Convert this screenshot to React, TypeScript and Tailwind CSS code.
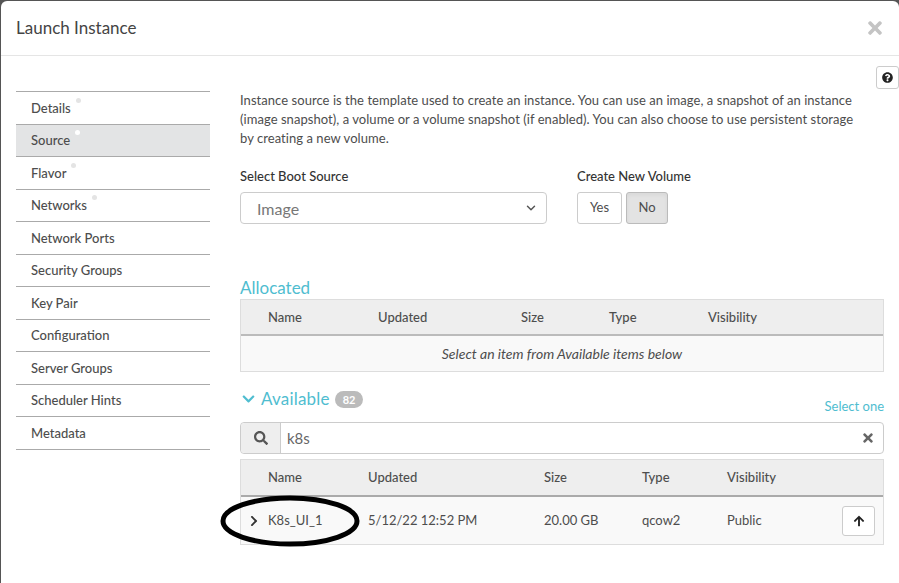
import { ChevronDown } from 'lucide-react';
import { FaArrowUp, FaChevronDown, FaChevronRight, FaQuestionCircle, FaSearch, FaTimes } from 'react-icons/fa';

const steps = [
  { label: 'Details', req: true },
  { label: 'Source', req: true, active: true },
  { label: 'Flavor', req: true },
  { label: 'Networks', req: true },
  { label: 'Network Ports' },
  { label: 'Security Groups' },
  { label: 'Key Pair' },
  { label: 'Configuration' },
  { label: 'Server Groups' },
  { label: 'Scheduler Hints' },
  { label: 'Metadata' },
];

export default function App() {
  return (
    <div className="h-[583px] w-[899px] overflow-hidden bg-[#555] pl-px pt-px font-['Lato',sans-serif] text-[13px] text-[#4d4d4d]">
      <div className="relative h-[582px] w-[898px] rounded-t-[6px] bg-white">
        <div className="flex h-[55px] items-center justify-between border-b border-[#e5e5e5] pl-[15px] pr-[15px]">
          <h1 className="text-[17px] font-normal text-[#444]">Launch Instance</h1>
          <FaTimes className="h-[20px] w-[18px] text-[#c4c4c4]" />
        </div>

        <div className="flex justify-end pt-[10px]">
          <button className="flex h-[23px] w-[23px] items-center justify-center rounded-[3px] border border-[#ccc]">
            <FaQuestionCircle className="h-[11px] w-[11px] text-[#222]" />
          </button>
        </div>

        <div className="mt-[2px] flex pl-[15px] pr-[15px]">
          <ul className="w-[194px] self-start border-b border-[#aaa]">
            {steps.map((s) => (
              <li key={s.label} className={`flex h-[32.55px] items-center border-t border-[#aaa] pl-[15px] pt-[1px] font-medium ${s.active ? 'bg-[#e3e4e5]' : ''}`}>
                <span className="relative">
                  {s.label}
                  {s.req && <span className={`absolute -right-[10px] -top-[1px] h-[5px] w-[5px] rounded-full ${s.active ? 'bg-white' : 'bg-[#e4e4e4]'}`} />}
                </span>
              </li>
            ))}
          </ul>

          <div className="ml-[30px] w-[644px]">
            <p className="w-[625px] text-[13px] leading-[19px] tracking-[0.05px]">
              Instance source is the template used to create an instance. You can use an image, a snapshot of an instance (image snapshot), a volume or a volume snapshot (if enabled). You can also choose to use persistent storage by creating a new volume.
            </p>

            <div className="mt-[19px] flex">
              <div className="w-[337px]">
                <div className="mb-[7px] h-[18px] font-medium leading-[18px] text-[#333]">Select Boot Source</div>
                <div className="flex h-[32px] w-[307px] items-center justify-between rounded-[4px] border border-[#ccc] pl-[16px] pr-[8px] text-[16px] text-[#777]">
                  <span className="pt-[1px]">Image</span>
                  <ChevronDown className="h-[14px] w-[14px] text-[#555]" strokeWidth={2.5} />
                </div>
              </div>
              <div>
                <div className="mb-[7px] h-[18px] font-medium leading-[18px] text-[#333]">Create New Volume</div>
                <div className="flex gap-[4px]">
                  <button className="h-[32px] w-[45px] rounded-[3px] border border-[#ccc]">Yes</button>
                  <button className="h-[32px] w-[42px] rounded-[3px] border border-[#bbb] bg-[#e3e3e3] shadow-inner">No</button>
                </div>
              </div>
            </div>

            <h2 className="mt-[53px] h-[22px] text-[17px] leading-[22px] text-[#4fbdd0]">Allocated</h2>
            <div className="border border-[#ddd]">
              <div className="flex h-[36px] items-center border-b-2 border-[#bbb] bg-[#eee] pt-[2px] font-medium">
                <span className="ml-[27px] w-[110px]">Name</span>
                <span className="w-[143px]">Updated</span>
                <span className="w-[88px]">Size</span>
                <span className="w-[99px]">Type</span>
                <span>Visibility</span>
              </div>
              <div className="flex h-[35px] items-center justify-center bg-[#f9f9f9] text-[14px] italic">
                Select an item from Available items below
              </div>
            </div>

            <div className="mt-[16px] flex h-[22px] items-center">
              <FaChevronDown className="h-[14px] w-[17px] text-[#4fbdd0]" />
              <span className="ml-[4px] text-[17px] tracking-[0.2px] text-[#4fbdd0]">Available</span>
              <span className="ml-[5px] rounded-full bg-[#bbb] px-[8px] py-[1px] text-[11px] font-bold leading-[15px] text-white">82</span>
              <span className="ml-auto mt-[16px] text-[13px] text-[#4fbdd0]">Select one</span>
            </div>

            <div className="mt-[12px] flex h-[32px] items-center rounded-[4px] border border-[#ccc]">
              <div className="flex h-full w-[40px] items-center justify-center rounded-l-[4px] border-r border-[#ccc] bg-[#eee]">
                <FaSearch className="h-[14px] w-[14px] text-[#555]" />
              </div>
              <span className="ml-[6px] text-[15px] text-[#666]">k8s</span>
              <FaTimes className="ml-auto mr-[9px] h-[14px] w-[12px] text-[#666]" />
            </div>

            <div className="mt-[5px] border border-[#ddd]">
              <div className="flex h-[37px] items-center border-b-2 border-[#aaa] bg-[#eee] font-medium">
                <span className="ml-[27px] w-[100px]">Name</span>
                <span className="w-[176px]">Updated</span>
                <span className="w-[98px]">Size</span>
                <span className="w-[85px]">Type</span>
                <span>Visibility</span>
              </div>
              <div className="flex h-[47px] items-center bg-[#f9f9f9]">
                <FaChevronRight className="ml-[8px] h-[12px] w-[10px] text-[#333]" />
                <span className="ml-[9px] w-[100px]">K8s_UI_1</span>
                <span className="w-[176px]">5/12/22 12:52 PM</span>
                <span className="w-[98px]">20.00 GB</span>
                <span className="w-[85px]">qcow2</span>
                <span className="w-[115px]">Public</span>
                <button className="flex h-[30px] w-[33px] items-center justify-center rounded-[3px] border border-[#ccc] bg-white">
                  <FaArrowUp className="h-[12px] w-[12px] text-[#222]" />
                </button>
              </div>
            </div>
          </div>
        </div>

        <svg className="absolute left-[218px] top-[494px]" width="144" height="54" viewBox="0 0 144 54" fill="none">
          <ellipse cx="71" cy="26" rx="67" ry="23" stroke="#000" strokeWidth="5" />
        </svg>
      </div>
    </div>
  );
}
